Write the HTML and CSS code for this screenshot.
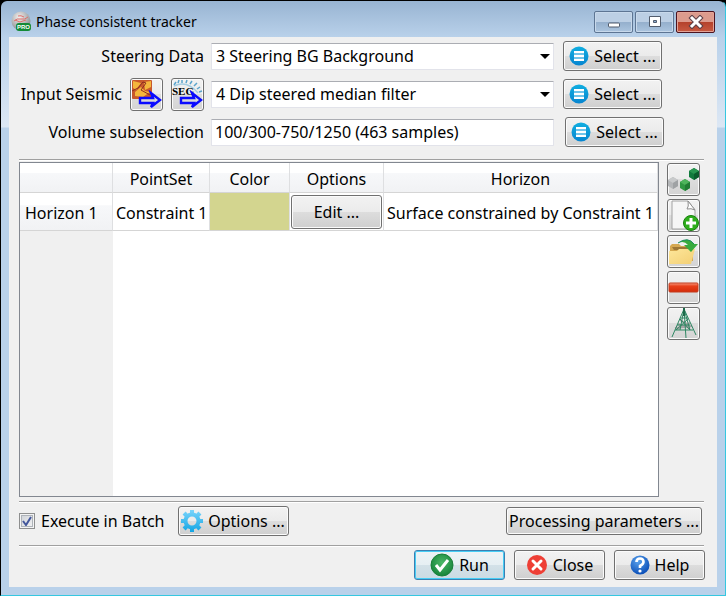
FILE: index.html
```html
<!DOCTYPE html>
<html lang="en">
<head>
    <meta charset="UTF-8">
    <meta name="viewport" content="width=device-width, initial-scale=1.0">
    <title>Phase consistent tracker</title>
    <link rel="stylesheet" href="styles.css">
</head>
<body>
    <svg class="defs" width="0" height="0" aria-hidden="true">
        <defs>
            <linearGradient id="blueDisc" x1="0" y1="0" x2="0" y2="1">
                <stop offset="0" stop-color="#11aee0"/>
                <stop offset="1" stop-color="#0785d0"/>
            </linearGradient>
            <linearGradient id="gearFill" gradientUnits="userSpaceOnUse" x1="0" y1="0" x2="0" y2="22">
                <stop offset="0" stop-color="#7ad4fb"/>
                <stop offset="1" stop-color="#12a5e4"/>
            </linearGradient>
            <linearGradient id="redBar" x1="0" y1="0" x2="0" y2="1">
                <stop offset="0" stop-color="#f79a80"/>
                <stop offset="0.35" stop-color="#e8401a"/>
                <stop offset="1" stop-color="#d42a08"/>
            </linearGradient>
            <linearGradient id="folderFill" x1="0" y1="0" x2="1" y2="1">
                <stop offset="0" stop-color="#fde69a"/>
                <stop offset="1" stop-color="#f3cf74"/>
            </linearGradient>
            <radialGradient id="greenDisc" cx="0.5" cy="0.4" r="0.6">
                <stop offset="0" stop-color="#4cb868"/>
                <stop offset="1" stop-color="#16843a"/>
            </radialGradient>
            <radialGradient id="helpDisc" cx="0.4" cy="0.3" r="0.7">
                <stop offset="0" stop-color="#5aa2ec"/>
                <stop offset="1" stop-color="#0b4fb8"/>
            </radialGradient>
            <radialGradient id="logoDisc" cx="0.4" cy="0.3" r="0.7">
                <stop offset="0" stop-color="#f2efee"/>
                <stop offset="1" stop-color="#8b8f92"/>
            </radialGradient>
            <symbol id="list" viewBox="0 0 20 20">
                <circle cx="10" cy="10" r="9.5" fill="url(#blueDisc)"/>
                <path d="M5 5h10v2H5zM5 9h10v2H5zM5 13h10v2H5z" fill="#fff"/>
                <path d="M5 7h10v2H5zM5 11h10v2H5z" fill="#6fc4ea"/>
            </symbol>
            <symbol id="arrow" viewBox="0 0 24 20">
                <path d="M2 8h13l-2-5 9 7-9 7 2-4H2z" fill="none" stroke="#0a0aff" stroke-width="2.4"/>
            </symbol>
        </defs>
    </svg>

    <div class="window">
        <header class="titlebar">
            <svg class="logo" width="21" height="21" viewBox="0 0 21 21">
                <circle cx="10" cy="10" r="9.5" fill="url(#logoDisc)"/>
                <path d="M3 10q3-3 7-2t7-2M7 5q3-1 6 1M4 9l5 2 6-2" fill="none" stroke="#e0706c"/>
                <rect x="5" y="12" width="15" height="8" rx="3" fill="#138a35"/>
                <text class="logo-text" x="6" y="18">PRO</text>
            </svg>
            <h1>Phase consistent tracker</h1>
            <div class="window-buttons">
                <button class="win-btn" aria-label="Minimize">
                    <svg width="14" height="14" viewBox="0 0 14 14"><rect x="1.500" y="8" width="11" height="4" rx="1" fill="#fff" stroke="#525c6c"/></svg>
                </button>
                <button class="win-btn" aria-label="Maximize">
                    <svg width="14" height="14" viewBox="0 0 14 14"><path d="M1.500 1.500h11v10h-11z" fill="#fff" stroke="#525c6c"/><path d="M5.500 5.500h3v2h-3z" fill="#8fb0d4" stroke="#525c6c"/></svg>
                </button>
                <button class="win-btn win-close" aria-label="Close window">
                    <svg width="16" height="14" viewBox="0 0 16 14">
                        <path d="M4 3l8 8M12 3l-8 8" stroke="#5c4048" stroke-width="5" stroke-linecap="square"/>
                        <path d="M4 3l8 8M12 3l-8 8" stroke="#fff" stroke-width="3" stroke-linecap="square"/>
                    </svg>
                </button>
            </div>
        </header>

        <main class="content">
            <div class="form">
                <label class="form-label" for="steering">Steering Data</label>
                <div class="combo">
                    <select id="steering"><option>3 Steering BG Background</option></select>
                    <svg width="10" height="5" viewBox="0 0 10 5"><path d="M0 0h10L5 5z"/></svg>
                </div>
                <button class="btn btn-select"><svg width="20" height="20"><use href="#list"/></svg>Select ...</button>

                <div class="form-label">
                    <label for="seismic">Input Seismic</label>
                    <button class="icon-btn" aria-label="Import CBVS">
                        <svg width="31" height="31" viewBox="0 0 31 31">
                            <rect x="1" y="1" width="20" height="19" rx="1" fill="#c8582c"/>
                            <path d="M2 2l8 2-5 7-3-2zM13 3l7-1v6l-6 3zM4 13l6-5 4 4 5 1-7 5-8-1z" fill="#f4b63c"/>
                            <path d="M1 12l6-3 5-6 3 1-5 7 9 5" fill="none" stroke="#8c2e20"/>
                            <use href="#arrow" x="7" y="11" width="24" height="20"/>
                        </svg>
                    </button>
                    <button class="icon-btn" aria-label="Import SEG-Y">
                        <svg width="31" height="31" viewBox="0 0 31 31">
                            <path d="M2 6l2-3M6 4l1-3M10 4V1M14 4l1-3M18 5l2-3M22 7l3-3M25 10l3-2M27 13l3-1" stroke="#5aa4cc" stroke-width="1.500"/>
                            <path d="M2 7q13-6 24 7" fill="none" stroke="#a4cde2" stroke-width="1.500"/>
                            <text class="segy-text" x="0" y="16">SEG</text>
                            <use href="#arrow" x="7" y="11" width="24" height="20"/>
                        </svg>
                    </button>
                </div>
                <div class="combo">
                    <select id="seismic"><option>4 Dip steered median filter</option></select>
                    <svg width="10" height="5" viewBox="0 0 10 5"><path d="M0 0h10L5 5z"/></svg>
                </div>
                <button class="btn btn-select"><svg width="20" height="20"><use href="#list"/></svg>Select ...</button>

                <label class="form-label" for="volume">Volume subselection</label>
                <input class="field" id="volume" type="text" value="100/300-750/1250 (463 samples)">
                <button class="btn btn-select"><svg width="20" height="20"><use href="#list"/></svg>Select ...</button>
            </div>

            <hr>

            <div class="middle">
                <div class="table-box">
                    <table>
                        <colgroup>
                            <col class="col-name"><col class="col-set"><col class="col-color"><col class="col-options"><col>
                        </colgroup>
                        <thead>
                            <tr><td></td><th>PointSet</th><th>Color</th><th>Options</th><th>Horizon</th></tr>
                        </thead>
                        <tbody>
                            <tr>
                                <th scope="row">Horizon 1</th>
                                <td>Constraint 1</td>
                                <td class="color-cell"></td>
                                <td class="button-cell"><button class="btn btn-edit">Edit ...</button></td>
                                <td>Surface constrained by Constraint 1</td>
                            </tr>
                        </tbody>
                    </table>
                </div>
                <div class="tools">
                    <button class="icon-btn" aria-label="Pick points">
                        <svg width="31" height="31" viewBox="0 0 31 31">
                            <path d="M5 13l5 3v6l-5 3-5-3v-6z" fill="#b4b6b8"/><path d="M0 16l5 3 5-3-5-3z" fill="#c8cacb"/><path d="M5 19v6l5-3v-6z" fill="#9fa2a4"/>
                            <path d="M17 15l5 3v6l-5 3-5-3v-6z" fill="#2f9842"/><path d="M12 18l5 3 5-3-5-3z" fill="#4eb45c"/><path d="M17 21v6l5-3v-6z" fill="#217c34"/>
                            <path d="M26 4l5 3v6l-5 3-5-3V7z" fill="#117a3c"/><path d="M21 7l5 3 5-3-5-3z" fill="#27964f"/><path d="M26 10v6l5-3V7z" fill="#0a5c2c"/>
                        </svg>
                    </button>
                    <button class="icon-btn" aria-label="New">
                        <svg width="31" height="31" viewBox="0 0 31 31">
                            <path d="M4 1h16l7 9v19H4z" fill="#f6f6f6" stroke="#a2a2a2"/>
                            <path d="M20 1q1 6-1 8 4-1 8 1z" fill="#fff" stroke="#8e8e8e"/>
                            <circle cx="23" cy="23" r="7.500" fill="#2fae1c" stroke="#16820c"/>
                            <path d="M21.500 18h3v3.500H28v3h-3.500V28h-3v-3.500H18v-3h3.500z" fill="#fff"/>
                        </svg>
                    </button>
                    <button class="icon-btn" aria-label="Open">
                        <svg width="31" height="31" viewBox="0 0 31 31">
                            <path d="M2 10l2-2h7l2 2h12v15H2z" fill="#d5a850"/>
                            <path d="M4 11h20l-2 3H6z" fill="#9c7634"/>
                            <path d="M1 15h8l2-2h16l-4 15H1z" fill="url(#folderFill)"/>
                            <path d="M10 7Q20 0 26 8h4l-7 8-7-7h4q-4-5-10-2z" fill="#37ab3e"/>
                            <path d="M10 7Q20 0 26 8" fill="none" stroke="#1b8a60"/>
                        </svg>
                    </button>
                    <button class="icon-btn" aria-label="Remove">
                        <svg width="31" height="31" viewBox="0 0 31 31"><rect x="1" y="11" width="29" height="9" rx="1" fill="url(#redBar)" stroke="#c23a1c"/></svg>
                    </button>
                    <button class="icon-btn" aria-label="Seed tower">
                        <svg width="31" height="31" viewBox="0 0 31 31">
                            <path d="M10 16l12 4M22 15L9 21M7 20l17-2M12 12l9 5" fill="none" stroke="#a5a5a5" stroke-width="2"/>
                            <path d="M16 1L4 29M16 1l-4 21M16 1l2 29M16 1l6 21M16 1l12 26M12 10h8M9 17h13M7 22h18M12 11l10 11M20 11L8 22" fill="none" stroke="#2f8763"/>
                            <path d="M16 0v8" stroke="#1c6a4a" stroke-width="2"/>
                        </svg>
                    </button>
                </div>
            </div>

            <hr>

            <div class="batch">
                <label class="check">
                    <span class="check-box">
                        <input type="checkbox" checked>
                        <svg width="10" height="10" viewBox="0 0 10 10"><path d="M1 5l3 4 5-8" fill="none" stroke="#43579c" stroke-width="2"/></svg>
                    </span>
                    Execute in Batch
                </label>
                <button class="btn btn-batch">
                    <svg width="22" height="22" viewBox="0 0 22 22">
                        <g fill="none" stroke="url(#gearFill)" stroke-width="4">
                            <path d="M9 2h4M9 20h4M2 9v4M20 9v4M3 6l3-3M16 3l3 3M3 16l3 3M19 16l-3 3"/>
                            <circle cx="11" cy="11" r="6.500"/>
                        </g>
                    </svg>Options ...
                </button>
                <button class="btn btn-params">Processing parameters ...</button>
            </div>

            <hr>

            <footer class="actions">
                <button class="btn btn-action btn-default">
                    <svg width="24" height="24" viewBox="0 0 24 24">
                        <circle cx="12" cy="12" r="11" fill="url(#greenDisc)" stroke="#1b7f3a"/>
                        <path d="M6 12l4 5 8-10" fill="none" stroke="#fff" stroke-width="3"/>
                    </svg>Run
                </button>
                <button class="btn btn-action">
                    <svg width="22" height="22" viewBox="0 0 22 22">
                        <circle cx="11" cy="11" r="10" fill="#ee3f35"/>
                        <path d="M7 7l8 8M15 7l-8 8" stroke="#fff" stroke-width="3" stroke-linecap="round"/>
                    </svg>Close
                </button>
                <button class="btn btn-action">
                    <svg width="20" height="20" viewBox="0 0 20 20">
                        <circle cx="10" cy="10" r="9.500" fill="url(#helpDisc)"/>
                        <path d="M6.500 7q0-3.500 3.500-3.500T13.500 7q0 2-3.500 4v2" fill="none" stroke="#fff" stroke-width="2.600"/>
                        <circle cx="10" cy="16" r="1.600" fill="#fff"/>
                    </svg>Help
                </button>
            </footer>
        </main>
    </div>
</body>
</html>
```

FILE: styles.css
```css
* {
    box-sizing: border-box;
    margin: 0;
    padding: 0;
}
body {
    background: #000;
    font-family: "Noto Sans", sans-serif;
    font-size: 16px;
    line-height: 20px;
    color: #000;
}
button, input, select {
    font: inherit;
    color: inherit;
}
svg {
    display: block;
    flex: none;
}
.defs {
    position: absolute;
}
.window {
    min-height: 100vh;
    display: flex;
    flex-direction: column;
    padding: 1px 8px 8px;
    border: 1px solid #000;
    border-right-color: #35c7e0;
    border-bottom-color: #35c7e0;
    border-radius: 7px 7px 0 0;
    background: linear-gradient(#98b4d2, #b9d1ea 36px, #dce7f4 126px, #b9d1ea 127px);
}
.titlebar {
    height: 35px;
    display: flex;
    align-items: flex-start;
    gap: 4px;
    padding: 9px 2px 0;
}
h1 {
    flex: 1;
    font-size: 14px;
    font-weight: 400;
    line-height: 22px;
}
.logo-text {
    font: bold 6px "Liberation Sans", sans-serif;
    fill: #fff;
}
.window-buttons {
    display: flex;
    gap: 2px;
}
.win-btn {
    width: 39px;
    height: 22px;
    display: flex;
    align-items: center;
    justify-content: center;
    border: 1px solid #5d7593;
    border-radius: 2px;
    box-shadow: inset 0 0 0 1px #c8d9eb;
    background: linear-gradient(#bccfe4 48%, #94afcc 50%, #acc5df);
}
.win-close {
    border-color: #4c1420;
    box-shadow: inset 0 0 0 1px #e3a397;
    background: linear-gradient(#dc9b8d 48%, #b4412b 50%, #c85a42);
}
.content {
    flex: 1;
    display: flex;
    flex-direction: column;
    padding: 4px 14px 7px 10px;
    background: #f0f0f0;
}
.form {
    display: grid;
    grid-template-columns: 185px 1fr 149px;
    grid-auto-rows: 30px;
    align-items: center;
    row-gap: 8px;
    margin-bottom: 12px;
}
.form-label {
    display: flex;
    align-items: center;
    justify-content: flex-end;
    gap: 8px;
}
.combo {
    display: grid;
    align-items: center;
}
.combo select, .combo svg {
    grid-area: 1 / 1;
}
.combo svg {
    justify-self: end;
    margin-right: 4px;
    pointer-events: none;
}
.combo, .field {
    margin: 0 0 0 7px;
}
select, .field {
    width: 100%;
    height: 27px;
    padding: 0 4px;
    appearance: none;
    border: 1px solid #e2e3ea;
    border-top-color: #abadb3;
    border-radius: 1px;
    background: #fff;
}
.field {
    width: auto;
    padding: 0 3px;
}
.btn {
    height: 30px;
    display: flex;
    align-items: center;
    justify-content: center;
    gap: 5px;
    border: 1px solid #707070;
    border-radius: 3px;
    box-shadow: inset 0 0 0 1px #fbfbfb;
    background: linear-gradient(#f2f2f2, #ebebeb 49%, #dddddd 50%, #cfcfcf);
    white-space: nowrap;
}
.btn-select {
    width: 99px;
    margin-left: 9px;
}
.field + .btn-select {
    margin-left: 11px;
}
.icon-btn {
    width: 33px;
    height: 33px;
    flex: none;
    border: 1px solid #707070;
    border-radius: 3px;
    box-shadow: inset 0 0 0 1px #fbfbfb;
    background: linear-gradient(#f2f2f2, #ebebeb 49%, #dddddd 50%, #d4d4d4);
}
.segy-text {
    font: bold 11px "Liberation Serif", serif;
}
hr {
    height: 2px;
    margin-right: -1px;
    border: 0;
    border-top: 1px solid #a0a0a0;
    background: #fff;
}
.middle {
    flex: 1;
    display: flex;
    gap: 8px;
    margin: 1px 3px 4px 0;
}
.table-box {
    flex: 1;
    border: 1px solid #828790;
    background: linear-gradient(90deg, #f0f0f0 93px, #fff 93px);
}
.tools {
    display: flex;
    flex-direction: column;
    gap: 3px;
    padding-top: 1px;
}
table {
    width: 100%;
    table-layout: fixed;
    border-collapse: separate;
    border-spacing: 0;
}
.col-name {
    width: 93px;
}
.col-set {
    width: 97px;
}
.col-color {
    width: 80px;
}
.col-options {
    width: 94px;
}
th, td {
    font-weight: 400;
    white-space: nowrap;
    border-right: 1px solid #dedfe1;
    border-bottom: 1px solid #d5d5d5;
}
thead tr > * {
    height: 30px;
    padding-top: 2px;
    background: linear-gradient(#fff 33%, #f7f8fa 34%, #f1f2f4);
}
tbody tr > * {
    height: 38px;
    padding: 2px 3px 0;
    text-align: left;
}
tbody th {
    padding: 2px 5px 0;
    background: linear-gradient(#fff 33%, #f7f8fa 34%, #f1f2f4);
}
tbody td {
    background: #fff;
}
tbody .color-cell {
    background: #d3d58f;
}
tbody .button-cell {
    padding: 0 1px;
}
.btn-edit {
    width: 100%;
    height: 34px;
}
.batch {
    display: flex;
    align-items: center;
    gap: 13px;
    padding: 3px 1px 9px 0;
}
.check {
    display: flex;
    align-items: center;
    gap: 6px;
}
.check-box {
    display: grid;
    place-items: center;
}
.check-box > * {
    grid-area: 1 / 1;
}
.check-box svg {
    pointer-events: none;
}
.check-box input {
    width: 16px;
    height: 16px;
    appearance: none;
    border: 1px solid #8e8f8f;
    box-shadow: inset 0 0 0 1px #f4f4f4, inset 0 0 0 2px #aeb3b9;
    background: linear-gradient(135deg, #cbcfd5, #f6f6f6);
}
.btn-batch {
    width: 111px;
}
.btn-params {
    width: 196px;
    height: 28px;
    margin-left: auto;
}
.actions {
    display: flex;
    justify-content: flex-end;
    gap: 9px;
    margin: 3px -2px 0 0;
}
.btn-action {
    width: 91px;
}
.btn-default {
    border-color: #3c7fb1;
    box-shadow: inset 0 0 0 1px #46cdf5;
    background: linear-gradient(#edf3f6, #e6eff3 49%, #d3e1e8 50%, #cbdbe3);
}
```
